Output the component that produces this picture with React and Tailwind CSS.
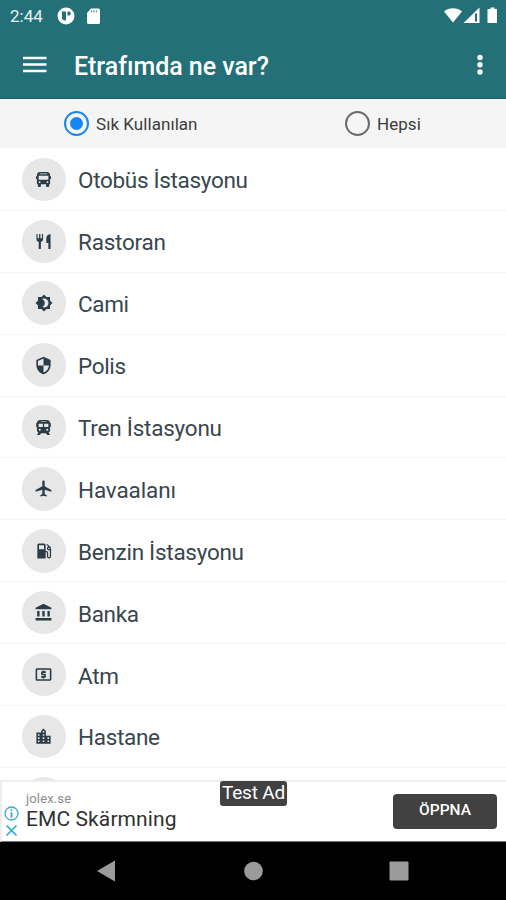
import { useState } from 'react'
import {
  MdBrightness4,
  MdSecurity,
  MdLocalAirport,
  MdLocalGasStation,
  MdAccountBalance,
  MdLocalAtm,
  MdLocationCity,
  MdLocalPharmacy,
} from 'react-icons/md'

function BusIcon({ size, color }) {
  return (
    <svg width={size} height={size} viewBox="0 0 16 16" fill={color} fillRule="evenodd">
      <path d="M3.500 0h9Q15 .5 15 3v1.500h1v3h-1V13h-1v2.200a.8.8 0 0 1-.8.8h-1.600a.8.8 0 0 1-.8-.8V13H5.200v2.200a.8.8 0 0 1-.8.8H2.800a.8.8 0 0 1-.8-.8V13H1V7.500H0v-3h1V3Q1 .5 3.500 0zM4 1.500v.8h8v-.8zM2.800 4v4.200h10.400V4zM3.800 9.800a1 1 0 1 0 0 2 1 1 0 0 0 0-2zM12.200 9.800a1 1 0 1 0 0 2 1 1 0 0 0 0-2z" />
    </svg>
  )
}

function RestaurantIcon({ size, color }) {
  return (
    <svg width={size} height={size} viewBox="0 0 16 16" fill={color}>
      <path d="M.500 0h1.200v4.500h1.600V0h1.400v4.500h1.600V0h1.200v5.500C7.500 7.300 6.500 8 5.200 8.400V16H2.900V8.400C1.500 8 .500 7.300.500 5.500z" />
      <path d="M15.500 0v16h-2.300V9.500H11V4.500C11 2 13 .3 15.500 0z" />
    </svg>
  )
}

function TrainIcon({ size, color }) {
  return (
    <svg width={size} height={size} viewBox="0 0 16 16" fill={color} fillRule="evenodd">
      <path d="M5 0h6c2.500 0 4 1.200 4 3.200h.8v4.300H15V11c0 1.200-.6 2-1.500 2.300L15 16h-3l-1.500-2h-5L4 16H1l1.500-2.700C1.600 13 1 12.200 1 11V7.500H.200V3.200H1C1 1.200 2.500 0 5 0zM5 1.500v.7h6v-.7zM2.800 4v3.500h4.500V4zM8.700 4v3.500h4.500V4zM4 9.300a1.100 1.100 0 1 0 0 2.200 1.100 1.100 0 0 0 0-2.200zM12 9.300a1.100 1.100 0 1 0 0 2.200 1.100 1.100 0 0 0 0-2.200z" />
    </svg>
  )
}

const places = [
  { name: 'Otobüs İstasyonu', icon: BusIcon, size: 15, width: 170 },
  { name: 'Rastoran', icon: RestaurantIcon, size: 15, width: 88 },
  { name: 'Cami', icon: MdBrightness4, size: 18, width: 51 },
  { name: 'Polis', icon: MdSecurity, size: 19, width: 48 },
  { name: 'Tren İstasyonu', icon: TrainIcon, size: 15, width: 144 },
  { name: 'Havaalanı', icon: MdLocalAirport, size: 19, width: 98 },
  { name: 'Benzin İstasyonu', icon: MdLocalGasStation, size: 20, width: 166 },
  { name: 'Banka', icon: MdAccountBalance, size: 19, width: 61 },
  { name: 'Atm', icon: MdLocalAtm, size: 19, width: 41 },
  { name: 'Hastane', icon: MdLocationCity, size: 19, width: 82 },
]

function StatusBar() {
  return (
    <div className="flex h-8 items-center pl-2.5 pr-[7px] text-[#e9f2f3]">
      <span className="w-[34px] text-[17px] leading-8">2:44</span>
      <svg className="ml-[13px]" width="18" height="18" viewBox="0 0 18 18">
        <circle cx="9" cy="9" r="8.500" fill="#fff" />
        <path d="M5 4.500h4v9H8A4.500 4.500 0 0 1 5 12z M10.500 4.500h1.300a2 2 0 0 1 0 4h-1.300z" fill="#237078" />
      </svg>
      <svg className="ml-[11px]" width="15" height="17" viewBox="0 0 15 17">
        <path d="M5 .500h7.500A1.500 1.500 0 0 1 14 2v12.500a1.500 1.500 0 0 1-1.500 1.500h-10A1.500 1.500 0 0 1 1 14.500V5z" fill="#fff" />
        <path d="M5.500 2.300v2.200M8 2.300v2.200M10.500 2.300v2.200" stroke="#6da2a7" strokeWidth="1.300" />
      </svg>
      <svg className="ml-auto" width="55" height="18" viewBox="0 0 55 18">
        <path d="M0 4.500C5 .2 13 .2 18 4.500L9 15.500z" fill="#fff" />
        <path d="M35.500.500V16H19.500z" fill="#fff" />
        <path d="M31 6.500h2v8h-2z" fill="#237078" />
        <path d="M46.500.500h4V2h2.500v14H43.500V2h3z" fill="#fff" />
      </svg>
    </div>
  )
}

function Radio({ label, checked, onChange }) {
  return (
    <label className="flex items-center">
      <input type="radio" name="filter" className="sr-only" checked={checked} onChange={onChange} />
      <span
        className={`flex h-[25px] w-[25px] items-center justify-center rounded-full border-2 ${checked ? 'border-[#1686f5]' : 'border-[#6b6b6b]'}`}>
        {checked && <span className="h-[13px] w-[13px] rounded-full bg-[#1686f5]" />}
      </span>
      <span className="ml-[7px] pt-px text-[17px] leading-6 tracking-[0.05px] text-[#3c3c3c]">{label}</span>
    </label>
  )
}

export default function App() {
  const [filter, setFilter] = useState('frequent')

  return (
    <div className="flex h-[900px] w-[506px] flex-col overflow-hidden bg-white font-[Roboto,sans-serif]">
      <header className="h-[99px] shrink-0 border-b border-[#175f68] bg-[#237078]">
        <StatusBar />
        <div className="flex h-[66px] items-center pl-[23px] pr-[23px] text-white">
          <svg width="24" height="18" viewBox="0 0 24 18">
            <path d="M0 2h23.500M0 8.500h23.500M0 15h23.500" stroke="#fff" strokeWidth="2.500" />
          </svg>
          <h1 className="ml-[27px] pt-[3px] text-[25px] font-medium leading-8 tracking-[-0.04px]">Etrafımda ne var?</h1>
          <svg className="ml-auto" width="6" height="22" viewBox="0 0 6 22">
            <circle cx="3" cy="3.500" r="2.700" fill="#fff" />
            <circle cx="3" cy="10.700" r="2.700" fill="#fff" />
            <circle cx="3" cy="18" r="2.700" fill="#fff" />
          </svg>
        </div>
      </header>

      <div className="flex h-[49px] shrink-0 items-center bg-[#f5f5f5] pl-16">
        <div className="w-[281px]">
          <Radio label="Sık Kullanılan" checked={filter === 'frequent'} onChange={() => setFilter('frequent')} />
        </div>
        <Radio label="Hepsi" checked={filter === 'all'} onChange={() => setFilter('all')} />
      </div>

      <ul className="min-h-0 flex-1 overflow-hidden pt-px">
        {places.map(({ name, icon: Icon, size, width }) => (
          <li key={name} className="flex h-[61.9px] items-center border-b border-[#f4f4f4] pl-[22px]">
            <span className="flex h-[43.500px] w-[43.500px] items-center justify-center rounded-full bg-[#e7e7e7]">
              <Icon size={size} color="#2b3c46" />
            </span>
            <svg className="ml-[12.500px]" width="300" height="32">
              <text x="0" y="25" textLength={width} fontSize="22.500" fill="#38464e">{name}</text>
            </svg>
          </li>
        ))}
        <li className="flex h-[62px] items-center pl-[22px]">
          <span className="flex h-[43.500px] w-[43.500px] items-center justify-center rounded-full bg-[#e7e7e7]">
            <MdLocalPharmacy size={18} color="#2b3c46" />
          </span>
        </li>
      </ul>

      <div className="relative flex h-[62px] shrink-0 items-center border-t-2 border-l-2 border-[#eee] border-b border-b-[#777] bg-white pr-[9px]">
        <div className="flex flex-col items-center gap-[3px] pl-0.5 pt-5">
          <svg width="15" height="15" viewBox="0 0 15 15" fill="none" stroke="#35a9d1">
            <circle cx="7.500" cy="7.500" r="6.500" strokeWidth="1.300" />
            <path d="M7.500 3.200v1.600M7.500 6.200v5.200" strokeWidth="1.800" />
          </svg>
          <svg width="13" height="13" viewBox="0 0 13 13" fill="none" stroke="#35a9d1" strokeWidth="1.700">
            <path d="M1.500 1.500l10 10M11.500 1.500l-10 10" />
          </svg>
        </div>
        <div className="ml-[7px] flex flex-col pb-0.5">
          <span className="text-[13px] leading-4 tracking-[0.15px] text-[#8c8c8c]">jolex.se</span>
          <span className="text-[21px] leading-6 tracking-[0.1px] text-[#303030]">EMC Skärmning</span>
        </div>
        <button className="ml-auto h-[35px] w-[104px] rounded bg-[#414141] pb-px text-[15.500px] font-medium text-white">ÖPPNA</button>
        <span className="absolute left-[218px] top-[-1px] flex h-[25px] w-[67px] items-center justify-center rounded-[3px] bg-[#414141] text-[19px] tracking-[-0.2px] text-white">
          Test Ad
        </span>
      </div>

      <nav className="h-[58px] shrink-0 bg-black">
        <svg width="506" height="58" viewBox="0 0 506 58" fill="#9b9b9b">
          <path d="M97 29l18-10.500v21z" />
          <circle cx="253.500" cy="29" r="9.300" />
          <rect x="389.500" y="19.500" width="19" height="19" rx="1" />
        </svg>
      </nav>
    </div>
  )
}
